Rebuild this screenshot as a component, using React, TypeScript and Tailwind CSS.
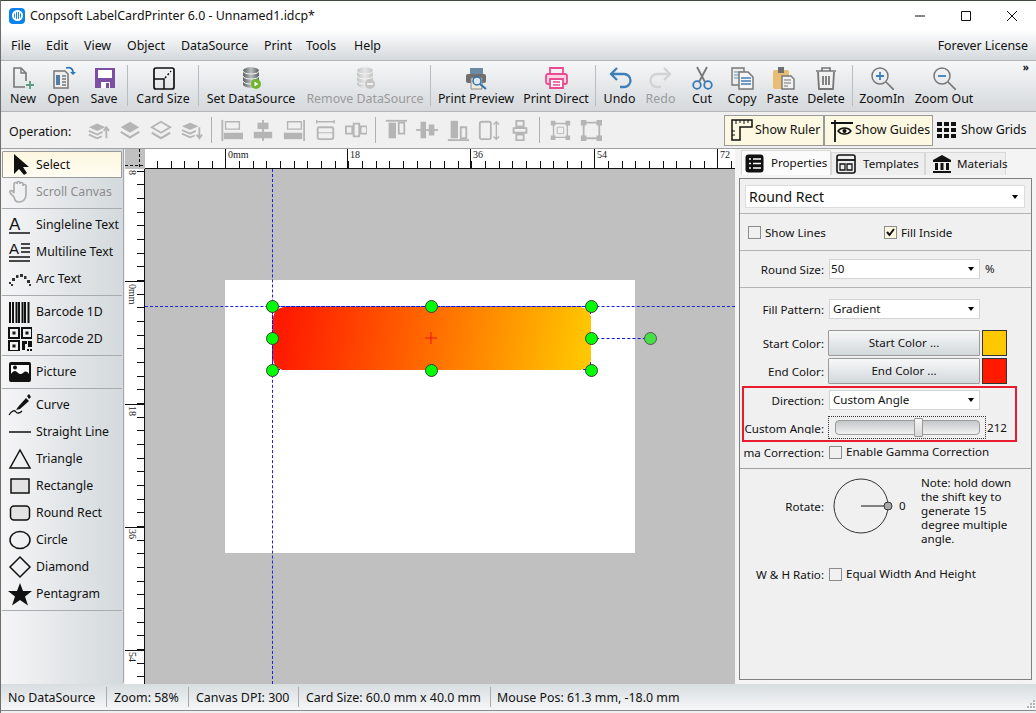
import React from "react";

const S = ({ s = 24, children, className = "" }: { s?: number; children: React.ReactNode; className?: string }) => (
  <svg width={s} height={s} viewBox={`0 0 ${s} ${s}`} fill="none" className={`block shrink-0 ${className}`}>{children}</svg>
);

const Db = ({ c1, c2 }: { c1: string; c2: string }) => (
  <>
    <defs><linearGradient id={c1.slice(1)} x1="0" x2="1" y1="0" y2="0"><stop offset="0" stopColor={c2} /><stop offset=".5" stopColor={c1} /><stop offset="1" stopColor={c2} /></linearGradient></defs>
    <path d="M4 5c0-5 16-5 16 0v13c0 5-16 5-16 0z" fill={`url(#${c1.slice(1)})`} />
    <path d="M4 5c0 4 16 4 16 0M4 10c0 4 16 4 16 0M4 15c0 4 16 4 16 0" stroke="#f4f4f4" strokeWidth="1" />
  </>
);

const tools: { label: string; w: string; dis?: boolean; icon: React.ReactNode }[] = [
  { label: "New", w: "w-[40px]", icon: <S><path d="M15 15V7l-5-5H3v19h11" stroke="#777" strokeWidth="1.6" /><path d="M10 2v5h5" stroke="#777" strokeWidth="1.4" /><path d="M19 15v8M15 19h8" stroke="#5d9c80" strokeWidth="1.8" /></S> },
  { label: "Open", w: "w-[41px]", icon: <S><path d="M2 5h11l3 3v14H2z" fill="#eee" stroke="#777" strokeWidth="1.5" /><path d="M4 9h4v10H4z" fill="#4f7ea8" /><path d="M10 10h4M10 13h4M10 16h4M10 19h4" stroke="#777" strokeWidth="1.4" /><path d="M14 2c4-1 7 0 7 5" stroke="#2d77b8" strokeWidth="1.7" /><path d="M18 6l3 3 3-3z" fill="#2d77b8" /></S> },
  { label: "Save", w: "w-[40px]", icon: <S><path d="M3 2h20v20H3z" fill="#7d4fa3" /><path d="M6 4h14v8H6z" fill="#fff" /><path d="M9 16h9v6H9z" fill="#fff" /><path d="M14 17h3v5h-3z" fill="#7d4fa3" /></S> },
  { label: "|", w: "", icon: null },
  { label: "Card Size", w: "w-[64px]", icon: <S><rect x="3" y="2" width="20" height="21" rx="2" stroke="#111" strokeWidth="1.7" /><path d="M3 13h10v10" stroke="#111" strokeWidth="1.5" /><path d="M14 12l6-7" stroke="#111" strokeWidth="1.5" strokeDasharray="2 2" /></S> },
  { label: "|", w: "", icon: null },
  { label: "Set DataSource", w: "w-[98px]", icon: <S><Db c1="#b9bdbd" c2="#5b6162" /><circle cx="17" cy="18" r="5" fill="#6fb52c" /><path d="M15.5 15.5l4 2.5-4 2.5z" fill="#fff" /></S> },
  { label: "Remove DataSource", w: "w-[124px] ml-[3px]", dis: true, icon: <S><Db c1="#e6e6e6" c2="#c4c4c4" /><circle cx="17" cy="18" r="5" fill="#c4c4c4" /><path d="M14 18h6" stroke="#fff" strokeWidth="1.5" /></S> },
  { label: "|", w: "", icon: null },
  { label: "Print Preview", w: "w-[84px]", icon: <S><path d="M6 2h13v6H6z" fill="#6d8aa5" /><rect x="2" y="8" width="20" height="9" rx="2" fill="#6f6f6f" /><path d="M7 12h11v11H7z" fill="#f0eadc" stroke="#888" /><circle cx="13" cy="15" r="4" fill="#dfe9f2" stroke="#2f73ad" strokeWidth="1.5" /><path d="M16 18l6 5" stroke="#2f73ad" strokeWidth="2" /></S> },
  { label: "Print Direct", w: "w-[72px] ml-[2px]", icon: <S><path d="M6 8V2h13v6" stroke="#ea4a90" strokeWidth="1.8" /><rect x="2" y="8" width="21" height="10" rx="2" fill="#fbd3e3" stroke="#ea4a90" strokeWidth="1.8" /><path d="M6 13h13v9H6z" fill="#fff" stroke="#ea4a90" strokeWidth="1.8" /><path d="M9 16h7M9 19h7" stroke="#ea4a90" strokeWidth="1.4" /></S> },
  { label: "|", w: "", icon: null },
  { label: "Undo", w: "w-[41px]", icon: <S><path d="M9 2L3 8l6 6" stroke="#3f7fb8" strokeWidth="2.3" /><path d="M3 8h13a6 6 0 0 1 0 13h-4" stroke="#3f7fb8" strokeWidth="2.3" /></S> },
  { label: "Redo", w: "w-[41px]", dis: true, icon: <S><path d="M15 2l6 6-6 6" stroke="#d2d2d2" strokeWidth="2.3" /><path d="M21 8H8a6 6 0 0 0 0 13h4" stroke="#d2d2d2" strokeWidth="2.3" /></S> },
  { label: "Cut", w: "w-[40px] ml-[1px]", icon: <S><path d="M7 1l8 15M17 1L9 16" stroke="#777" strokeWidth="1.8" /><circle cx="7" cy="19" r="3.8" stroke="#3a78b5" strokeWidth="1.8" /><circle cx="18" cy="19" r="3.8" stroke="#3a78b5" strokeWidth="1.8" /></S> },
  { label: "Copy", w: "w-[40px]", icon: <S><path d="M2 2h12v17H2z" fill="#eee" stroke="#777" strokeWidth="1.4" /><path d="M4 6h8M4 9h8M4 12h8" stroke="#5f8fb8" strokeWidth="1.2" /><path d="M9 6h9l5 5v12H9z" fill="#f6f6f6" stroke="#777" strokeWidth="1.5" /><path d="M11 12h10M11 15h10M11 18h10" stroke="#3f7fb8" strokeWidth="1.4" /></S> },
  { label: "Paste", w: "w-[41px]", icon: <S><rect x="2" y="4" width="16" height="19" rx="2" fill="#e8bd74" /><path d="M7 1h6v6H7z" fill="#6f6f6f" /><path d="M11 10h9l3 3v10H11z" fill="#f1f1f1" stroke="#777" strokeWidth="1.4" /><path d="M13 14h7M13 17h7M13 20h4" stroke="#777" strokeWidth="1.2" /></S> },
  { label: "Delete", w: "w-[46px]", icon: <S><path d="M2 5h20M8 5V2h8v3" stroke="#777" strokeWidth="1.7" /><path d="M4 6l1 17h14l1-17" stroke="#777" strokeWidth="1.8" fill="#f1f1f1" /><path d="M9 10v9M12 10v9M15 10v9" stroke="#777" strokeWidth="1.8" /></S> },
  { label: "|", w: "", icon: null },
  { label: "ZoomIn", w: "w-[52px]", icon: <S><circle cx="10" cy="10" r="8" stroke="#777" strokeWidth="1.5" /><path d="M16 16l8 8" stroke="#777" strokeWidth="1.7" /><path d="M10 6v8M6 10h8" stroke="#3f7fb8" strokeWidth="1.8" /></S> },
  { label: "Zoom Out", w: "w-[66px] ml-[3px]", icon: <S><circle cx="10" cy="10" r="8" stroke="#777" strokeWidth="1.5" /><path d="M16 16l8 8" stroke="#777" strokeWidth="1.7" /><path d="M6 10h8" stroke="#3f7fb8" strokeWidth="1.8" /></S> },
];

const g = "#b5b5b5";
const opIcons: (React.ReactNode | string)[] = [
  <S><path d="M1 9l9-4 9 4-9 4z" fill={g} /><path d="M1 13l9 4 6-3M1 17l9 4 5-2" stroke={g} strokeWidth="2" /><path d="M20 21V10M17 13l3-4 3 4" stroke={g} strokeWidth="2" /></S>,
  <S><path d="M2 9l10-6 10 6-10 6z" fill={g} /><path d="M2 14l10 6 10-6" stroke={g} strokeWidth="2.4" /></S>,
  <S><path d="M2 9l10-6 10 6-10 6z" stroke={g} strokeWidth="2" /><path d="M2 15l10 6 10-6" stroke={g} strokeWidth="2.4" /></S>,
  <S><path d="M1 8l9-4 9 4-9 4z" fill={g} /><path d="M1 12l9 4 6-3M1 16l9 4 5-2" stroke={g} strokeWidth="2" /><path d="M20 9v11M17 17l3 4 3-4" stroke={g} strokeWidth="2" /></S>,
  "|",
  <S><path d="M1.5 1v23" stroke={g} strokeWidth="2" /><path d="M5 3h15v8H5z" stroke={g} strokeWidth="1.5" /><path d="M3 15h21v7H3z" fill={g} /></S>,
  <S><path d="M12 1v23" stroke={g} strokeWidth="2" /><path d="M6 4h12v7H6z" fill={g} /><path d="M2 14h20v7H2z" fill={g} /></S>,
  <S><path d="M23 1v23" stroke={g} strokeWidth="2" /><path d="M5 3h15v8H5z" stroke={g} strokeWidth="1.5" /><path d="M1 15h20v7H1z" fill={g} /></S>,
  <S><path d="M3 3h19M3 1v4M22 1v4" stroke={g} strokeWidth="1.5" /><rect x="4" y="9" width="17" height="13" rx="2" stroke={g} strokeWidth="2" /><path d="M4 15h17" stroke={g} /></S>,
  <S><path d="M0 12h25" stroke={g} /><path d="M1 8h7v8H1zM9.5 5h6v14h-6zM17 8h7v8h-7z" fill="#f0f0f0" stroke={g} strokeWidth="2" /></S>,
  "|",
  <S><path d="M1 2h23" stroke={g} strokeWidth="2" /><path d="M4 4h8v17H4z" fill={g} /><path d="M15 4h6v12h-6z" stroke={g} strokeWidth="2" /></S>,
  <S><path d="M0 12h24" stroke={g} strokeWidth="2" /><path d="M5 3h6v18H5z" fill={g} /><path d="M14 6h6v12h-6z" fill={g} /></S>,
  <S><path d="M1 23h23" stroke={g} strokeWidth="2" /><path d="M4 2h8v19H4z" fill={g} /><path d="M15 9h6v12h-6z" stroke={g} strokeWidth="2" /></S>,
  <S><rect x="2" y="3" width="12" height="19" rx="2" stroke={g} strokeWidth="2" /><path d="M20 3v19M17 6l3-3 3 3M17 19l3 3 3-3" stroke={g} strokeWidth="1.5" /></S>,
  <S><path d="M12 1v23" stroke={g} /><path d="M8 2h8v6H8zM5 10h14v5H5zM8 17h8v6H8z" fill="#f0f0f0" stroke={g} strokeWidth="2" /></S>,
  "|",
  <S><path d="M5 5h15v15H5z" stroke={g} strokeWidth="1.5" /><path d="M9 9h7v7H9z" stroke={g} /><path d="M2 2h5v5H2zM18 2h5v5h-5zM2 18h5v5H2zM18 18h5v5h-5z" fill={g} /></S>,
  <S><path d="M4 4h17v17H4z" stroke={g} strokeWidth="2" /><path d="M1 1h6v6H1zM18 1h6v6h-6zM1 18h6v6H1zM18 18h6v6h-6z" fill={g} /></S>,
];

const k = "#111";
const side: (null | { label: string; dis?: boolean; active?: boolean; icon: React.ReactNode })[] = [
  { label: "Select", active: true, icon: <S><path d="M6 2v20l5-5 5 6 3-2-4-6h6z" fill={k} transform="translate(0 -1)" /></S> },
  { label: "Scroll Canvas", dis: true, icon: <S><path d="M6 17c-3-3-5-5-4-6s3 0 4 2l0-9c0-2 3-2 3 0V3c0-2 3-2 3 0v1c0-2 3-2 3 0v2c0-2 3-2 3 0v8c0 5-3 8-7 8s-4-2-5-5z" stroke="#adadad" strokeWidth="1.7" /></S> },
  null,
  { label: "Singleline Text", icon: <S><text x="1" y="17" fontSize="17" fill={k} fontFamily="Liberation Sans">A</text><path d="M1 20h21" stroke={k} strokeWidth="1.5" /></S> },
  { label: "Multiline Text", icon: <S><text x="1" y="14" fontSize="15" fill={k} fontFamily="Liberation Sans">A</text><path d="M13 4h9M13 8h9M13 12h9M1 17h21M1 21h21" stroke={k} strokeWidth="1.4" /></S> },
  { label: "Arc Text", icon: <S><path d="M1 15h2v2H1zM3 17h2v2H3zM4 11h3v3H4zM8 8h2.500v3H8zM12 7h3v3h-3zM16 9h2.500v3H16zM19 13h3v3h-3zM21 17h2v2h-2z" fill="#333" /></S> },
  null,
  { label: "Barcode 1D", icon: <S><path d="M2 2v21M5 2v21M8.5 2v21M11 2v21M14.5 2v21M17 2v21M20.5 2v21" stroke={k} strokeWidth="2" /></S> },
  { label: "Barcode 2D", icon: <S><path d="M1 1h10v10H1zM14 1h10v10H14zM1 14h10v10H1z" stroke={k} strokeWidth="2" /><path d="M4.5 4.5h3v3h-3zM17.5 4.5h3v3h-3zM4.500 17.5h3v3h-3z" fill={k} /><path d="M14 14h5v3h-2v6h-3zM20 14h4v6h-4zM19 22h2v2h-2zM22 22h2v2h-2z" fill={k} /></S> },
  null,
  { label: "Picture", icon: <S><rect x="1" y="2" width="22" height="20" rx="2" fill={k} /><path d="M3 5h18v9c-2-3-4-3-6-1-2 2-4 1-6-1-2-2-4-1-6 2z" fill="#fff" /><circle cx="7" cy="7.5" r="2" fill={k} /></S> },
  null,
  { label: "Curve", icon: <S><path d="M10 14l8-9 3 3-9 8-4 1z" fill={k} /><path d="M19 3l2-2 2 3-2 2z" fill={k} /><path d="M1 22c3-5 6-5 7-3s4 1 6-1" stroke={k} strokeWidth="1.3" /></S> },
  { label: "Straight Line", icon: <S><path d="M1 12h22" stroke={k} strokeWidth="1.5" /></S> },
  { label: "Triangle", icon: <S><path d="M12 3L2 21h20z" stroke={k} strokeWidth="1.5" /></S> },
  { label: "Rectangle", icon: <S><path d="M3 5h18v14H3z" fill="#e3e3e3" stroke={k} strokeWidth="1.5" /></S> },
  { label: "Round Rect", icon: <S><rect x="2.5" y="5" width="19" height="14" rx="3.5" fill="#e3e3e3" stroke={k} strokeWidth="1.5" /></S> },
  { label: "Circle", icon: <S><ellipse cx="12" cy="12" rx="10" ry="8.5" stroke={k} strokeWidth="1.5" /></S> },
  { label: "Diamond", icon: <S><path d="M12 2l10 10-10 10L2 12z" stroke={k} strokeWidth="1.5" /></S> },
  { label: "Pentagram", icon: <S><path d="M12 1l3 8h9l-7 5.5 3 9-8-5.5-8 5.5 3-9-7-5.5h9z" fill={k} /></S> },
  null,
];

const Caret = () => <span className="ml-auto w-0 h-0 border-x-[3.5px] border-x-transparent border-t-[4px] border-t-black" />;

const Drop = ({ text, cls = "" }: { text: string; cls?: string }) => (
  <div className={`flex items-center w-[151px] h-[20px] bg-white border border-[#d4d4d4] pl-[3px] pr-[5px] ${cls}`}>
    <span>{text}</span><Caret />
  </div>
);

const Check = ({ on = false }: { on?: boolean }) => (
  <span className={`block w-[13px] h-[13px] shrink-0 border border-[#8c8c8c] ${on ? "bg-[#fdf8e2]" : "bg-[#f0f0f0]"}`}>
    {on && <svg width="11" height="11" viewBox="0 0 11 11" className="block"><path d="M2 5l2.5 3L9 2" stroke="#111" strokeWidth="2" fill="none" /></svg>}
  </span>
);

const Label = ({ text, w = "w-[84px]" }: { text: string; w?: string }) => (
  <div className={`flex justify-end overflow-hidden whitespace-nowrap shrink-0 mr-[5px] pt-[2px] ${w}`}><span className="shrink-0">{text}</span></div>
);

const ColorBtn = ({ text }: { text: string }) => (
  <div className="flex items-center justify-center w-[152px] h-full -ml-[1px] border border-[#9a9a9a] rounded-[1px] bg-gradient-to-b from-[#f7f8f8] to-[#d3d8db]">{text}</div>
);

const topTicks = Array.from({ length: 44 }, (_, i) => 12 + i * 13.67);
const leftTicks = Array.from({ length: 38 }, (_, i) => 1.7 + i * 13.67);

const Handle = ({ cls }: { cls: string }) => (
  <span className={`absolute w-[13px] h-[13px] rounded-full bg-[#00ff00] border border-[#3a3a3a] ${cls}`} />
);

export default function App() {
  return (
    <div className="relative w-[1036px] h-[713px] overflow-hidden bg-[#f0f0f0] text-[12.4px] text-[#111] font-['DejaVu_Sans',sans-serif] [font-stretch:condensed] leading-none border-l border-l-[#6e6e6e] border-t border-t-[#3f4a3f]">
      {/* title */}
      <div className="flex items-center h-[29px] bg-white">
        <div className="flex items-center justify-center w-[16px] h-[16px] ml-[8px] rounded-[4px] bg-[#0a84ea]">
          <div className="w-[11px] h-[11px] rounded-full bg-white flex items-center justify-center"><div className="w-[7px] h-[7px] rounded-full bg-[repeating-linear-gradient(90deg,#0a84ea_0_1px,#ffffff_1px_2px)]" /></div>
        </div>
        <span className="ml-[5px] pt-[2px]">Conpsoft LabelCardPrinter 6.0 - Unnamed1.idcp*</span>
        <div className="ml-auto flex items-center">
          <svg width="12" height="12" viewBox="0 0 12 12" className="mr-[34px]"><path d="M1 6h10" stroke="#111" /></svg>
          <svg width="12" height="12" viewBox="0 0 12 12" className="mr-[34px]"><path d="M1.5 1.5h9v9h-9z" stroke="#111" fill="none" /></svg>
          <svg width="12" height="12" viewBox="0 0 12 12" className="mr-[18px]"><path d="M1 1l10 10M11 1L1 11" stroke="#111" /></svg>
        </div>
      </div>
      {/* menu */}
      <div className="flex items-center h-[31px] pt-[2px] pl-[10px] pr-[8px] bg-gradient-to-b from-white to-[#d5d9dc] border-b border-b-[#b4b4b4]">
        <span className="w-[35px]">File</span><span className="w-[38px]">Edit</span><span className="w-[43px]">View</span><span className="w-[54px]">Object</span><span className="w-[83px]">DataSource</span><span className="w-[42px]">Print</span><span className="w-[48px]">Tools</span><span>Help</span>
        <span className="ml-auto">Forever License</span>
      </div>
      {/* toolbar */}
      <div className="relative flex items-start h-[51px] pl-[2px] pt-[5px] bg-gradient-to-b from-[#f6f7f8] to-[#d5d9dc] border-b border-b-[#b4b4b4]">
        {tools.map((t, i) =>
          t.label === "|" ? (
            <div key={i} className="w-px h-[41px] -mt-[1px] mx-[3px] bg-[#b9bdc0] shrink-0" />
          ) : (
            <div key={i} className={`flex flex-col items-center shrink-0 ${t.w} ${t.dis ? "text-[#9a9a9a]" : ""}`}>
              {t.icon}
              <span className="mt-[2px] h-[15px] flex items-center whitespace-nowrap">{t.label}</span>
            </div>
          )
        )}
        <span className="absolute right-[7px] top-[1px] text-[10px] font-bold">»</span>
      </div>
      {/* operation */}
      <div className="flex items-center h-[37px] pl-[8px] pr-[5px] bg-[#f0f0f0] border-b border-b-[#a0a0a0]">
        <span className="w-[74px] shrink-0 pt-[4px]">Operation:</span>
        {opIcons.map((c, i) =>
          c === "|" ? (
            <div key={i} className="w-px h-[26px] mx-[4px] bg-[#b0b0b0] shrink-0" />
          ) : (
            <div key={i} className="w-[32px] -mx-[0.5px] flex justify-center shrink-0 scale-[0.92]">{c}</div>
          )
        )}
        <div className="ml-auto flex items-center h-[31px] whitespace-nowrap">
          <div className="flex items-center h-full w-[100px] pl-[5px] bg-[#fdf8e2] border border-[#9a9a9a]">
            <S><path d="M2 2h20v7H10v13H2z" stroke={k} strokeWidth="1.5" /><path d="M6 2v4M10 2v3M14 2v4M18 2v3M2 13h3M2 17h3" stroke={k} /></S>
            <span className="ml-[1px]">Show Ruler</span>
          </div>
          <div className="flex items-center h-full w-[109px] pl-[5px] bg-[#fdf8e2] border border-[#9a9a9a]">
            <S><path d="M5 2v22M1 5h22" stroke={k} strokeWidth="1.8" /><path d="M8 13c3-4 10-4 13 0-3 4-10 4-13 0z" stroke={k} strokeWidth="1.3" /><circle cx="14.5" cy="13" r="2" fill={k} /></S>
            <span className="ml-[1px]">Show Guides</span>
          </div>
          <div className="flex items-center ml-[3px] w-[95px]">
            <S s={20}><path d="M1 2h5v4H1zM8 2h5v4H8zM15 2h5v4h-5zM1 8h5v4H1zM8 8h5v4H8zM15 8h5v4h-5zM1 14h5v4H1zM8 14h5v4H8zM15 14h5v4h-5z" fill={k} /></S>
            <span className="ml-[5px]">Show Grids</span>
          </div>
        </div>
      </div>
      {/* main */}
      <div className="flex h-[535px]">
        {/* left */}
        <div className="w-[123px] shrink-0 pt-[2px] px-[1px] text-[12.3px] bg-gradient-to-r from-[#f5f5f6] to-[#d3d9dc] border-r border-r-[#a8a8a8] rounded-br-[3px] mr-[1px]">
          {side.map((r, i) =>
            r === null ? (
              <div key={i} className="h-[6px] flex items-center"><div className="w-full h-px bg-[#a9acae]" /></div>
            ) : (
              <div key={i} className={`flex items-center h-[27px] ${r.dis ? "text-[#8c8c8c]" : ""} ${r.active ? "bg-gradient-to-b from-[#fdf7e0] to-[#fffdf2] border border-[#9a9a9a] rounded-[1px] pl-[5px]" : "pl-[6px]"}`}>
                {r.icon}
                <span className="ml-[4px] pt-[2px] whitespace-nowrap">{r.label}</span>
              </div>
            )
          )}
        </div>
        {/* canvas + rulers */}
        <div className="w-[610px] shrink-0 flex flex-col">
          <div className="flex h-[20px] shrink-0">
            <div className="relative w-[20px] bg-[#c0c0c0]">
              <svg width="20" height="20" className="block"><path d="M14.5 0v20M0 16.5h20" stroke="#111" strokeDasharray="3 2" /></svg>
            </div>
            <svg width="590" height="20" className="block bg-white">
              {topTicks.map((x, i) => <path key={i} d={`M${Math.round(x) + 0.5} 12v7`} stroke="#111" />)}
              {[80, 202, 325, 449, 572].map((x) => <path key={x} d={`M${x + 0.5} 0v19`} stroke="#111" />)}
              <path d="M0 19.5h590" stroke="#111" />
              {[["0mm", 83], ["18", 205], ["36", 328], ["54", 452], ["72", 575]].map(([t, x]) => (
                <text key={t} x={x} y="9" fontSize="10" fill="#222" fontFamily="Liberation Serif">{t}</text>
              ))}
            </svg>
          </div>
          <div className="flex flex-1 min-h-0">
            <svg width="20" height="515" className="block bg-white shrink-0">
              {leftTicks.map((y, i) => <path key={i} d={`M12 ${Math.round(y) + 0.5}h8`} stroke="#111" />)}
              {[112, 235, 358, 481].map((y) => <path key={y} d={`M0 ${y + 0.5}h20`} stroke="#111" />)}
              <path d="M19.5 0v515" stroke="#111" />
              {[["8", 1], ["0mm", 115], ["18", 237], ["36", 360], ["54", 483]].map(([t, y]) => (
                <text key={t} x="4" y={y} fontSize="10" fill="#222" fontFamily="Liberation Serif" transform={`rotate(90 4 ${y})`}>{t}</text>
              ))}
            </svg>
            <div className="relative flex-1 bg-[#c0c0c0] overflow-hidden">
              <div className="absolute left-[80px] top-[111px] w-[410px] h-[273px] bg-white" />
              <div className="absolute left-[127px] top-0 h-full w-0 border-0 border-l border-dashed border-[#2020e0]" />
              <div className="absolute left-0 top-[137px] w-full border-t border-dashed border-t-[#2020e0]" />
              <div className="absolute left-[127px] top-[137px] w-[319px] h-[64px] border border-dashed border-[#1010e0]" />
              <div className="absolute left-[128px] top-[138px] w-[318px] h-[63px] rounded-[12px] bg-[linear-gradient(100deg,#ff1a00_4%,#ff5a00_40%,#ffa500_80%,#ffc800_98%)]" />
              <svg width="12" height="12" viewBox="0 0 12 12" className="absolute left-[280px] top-[163px]"><path d="M0 6h12M6 0v12" stroke="#f01010" /></svg>
              <div className="absolute left-[446px] top-[169px] w-[60px] border-t border-dashed border-t-[#1010e0]" />
              <span className="absolute left-[499px] top-[163px] w-[13px] h-[13px] rounded-full bg-[#45e045] border border-[#555]" />
              <Handle cls="left-[121px] top-[131px]" />
              <Handle cls="left-[280px] top-[131px]" />
              <Handle cls="left-[440px] top-[131px]" />
              <Handle cls="left-[121px] top-[163px]" />
              <Handle cls="left-[440px] top-[163px]" />
              <Handle cls="left-[121px] top-[195px]" />
              <Handle cls="left-[280px] top-[195px]" />
              <Handle cls="left-[440px] top-[195px]" />
            </div>
          </div>
        </div>
        {/* right */}
        <div className="w-[301px] shrink-0 pl-[4px] pr-[4px] pt-[1px] bg-[#f4f4f4] text-[11.6px]">
          <div className="flex items-end h-[25px] mb-[3px] pl-[2px]">
            <div className="flex items-center h-[25px] w-[90px] pl-[3px] bg-[#fbfbfb] border border-b-0 border-[#d8d8d8]">
              <S s={19}><rect x="0.5" y="0.5" width="18" height="18" rx="3" fill={k} /><path d="M4 5h2M8 5h8M4 9.5h2M8 9.5h8M4 14h2M8 14h8" stroke="#fff" strokeWidth="1.6" /></S>
              <span className="ml-[7px]">Properties</span>
            </div>
            <div className="flex items-center h-[23px] w-[94px] pl-[4px] bg-[#eeeeee] border border-b-0 border-[#d8d8d8]">
              <S s={20}><rect x="1" y="1" width="18" height="18" rx="2" stroke={k} strokeWidth="1.6" /><path d="M1 6h18" stroke={k} strokeWidth="1.8" /><path d="M4 10h5v6H4zM11 10h5v6h-5z" stroke={k} strokeWidth="1.3" /></S>
              <span className="ml-[7px]">Templates</span>
            </div>
            <div className="flex items-center h-[23px] w-[81px] pl-[6px] bg-[#eeeeee] border border-b-0 border-[#d8d8d8]">
              <S s={20}><path d="M10 1l9 5v2H1V6z" fill={k} /><path d="M3 9h3v7H3zM8.5 9h3v7h-3zM14 9h3v7h-3zM1 17h18v2H1z" fill={k} /></S>
              <span className="ml-[5px]">Materials</span>
            </div>
          </div>
          <div className="h-[502px] border border-[#808080] bg-[#f0f0f0]">
            <div className="h-[35px] pt-[6px] px-[5px] border-b border-b-[#b4b4b4]">
              <div className="flex items-center h-[23px] w-[280px] bg-white border border-[#dcdcdc] pl-[3px] pr-[6px] text-[14px]"><span>Round Rect</span><Caret /></div>
            </div>
            <div className="flex items-center h-[37px] pl-[8px] pt-[1px] border-b border-b-[#b4b4b4]">
              <Check /><span className="ml-[4px] w-[119px]">Show Lines</span><Check on /><span className="ml-[4px]">Fill Inside</span>
            </div>
            <div className="flex items-center h-[37px] border-b border-b-[#b4b4b4]">
              <Label text="Round Size:" /><Drop text="50" cls="!pl-[1px]" /><span className="ml-[5px]">%</span>
            </div>
            <div className="h-[181px] pt-[11px] border-b border-b-[#a0a0a0]">
              <div className="flex items-center h-[20px]"><Label text="Fill Pattern:" /><Drop text="Gradient" /></div>
              <div className="flex items-center h-[26px] mt-[11px]">
                <Label text="Start Color:" /><ColorBtn text="Start Color ..." /><div className="w-[25px] h-[26px] ml-[2px] bg-[#ffc800] border border-[#333]" />
              </div>
              <div className="flex items-center h-[26px] mt-[2px]">
                <Label text="End Color:" /><ColorBtn text="End Color ..." /><div className="w-[25px] h-[26px] ml-[2px] bg-[#ff1a00] border border-[#333]" />
              </div>
              <div className="h-[56px] w-[275px] ml-[2px] mt-[2px] pt-[2px] border-2 border-[#e81c2c]">
                <div className="flex items-center h-[20px]"><Label text="Direction:" w="w-[80px]" /><Drop text="Custom Angle" /></div>
                <div className="flex items-center h-[23px] mt-[6px]">
                  <Label text="Custom Angle:" w="w-[80px]" />
                  <div className="relative flex items-center -ml-[1px] w-[158px] h-[23px] border border-dotted border-[#333] pl-[6px]">
                    <div className="w-[145px] h-[15px] rounded-[4px] border border-[#9a9a9a] bg-gradient-to-b from-[#c4c7c9] to-[#f2f2f2]" />
                    <div className="absolute left-[85px] top-[1px] w-[9px] h-[19px] rounded-[1px] bg-gradient-to-b from-[#f5f5f5] to-[#d8d8d8] border border-[#9a9a9a]" />
                  </div>
                  <span className="ml-[1px]">212</span>
                </div>
              </div>
              <div className="flex items-center h-[18px] mt-[1px]">
                <Label text="Gamma Correction:" w="w-[80px] ml-[4px]" /><Check /><span className="ml-[4px]">Enable Gamma Correction</span>
              </div>
            </div>
            <div className="flex h-[96px] pt-[8px]">
              <div className="flex items-center h-[58px]"><Label text="Rotate:" /></div>
              <div className="relative w-[80px] h-[60px] shrink-0">
                <svg width="70" height="60" viewBox="0 0 70 60" className="block">
                  <circle cx="32" cy="29" r="27" stroke="#333" fill="none" />
                  <path d="M32 29h27" stroke="#111" />
                  <circle cx="59" cy="29" r="4" fill="#a9a9a9" stroke="#333" />
                </svg>
                <span className="absolute left-[70px] top-[23px]">0</span>
              </div>
              <div className="ml-[12px] w-[100px] leading-[14px] -mt-[1px] whitespace-nowrap">
                Note: hold down<br />the shift key to<br />generate 15<br />degree multiple<br />angle.
              </div>
            </div>
            <div className="flex items-center h-[18px]">
              <Label text="W & H Ratio:" /><Check /><span className="ml-[4px]">Equal Width And Height</span>
            </div>
          </div>
        </div>
      </div>
      {/* status */}
      <div className="relative flex items-center h-[27px] pl-[7px] bg-gradient-to-b from-[#d8dde0] to-[#f6f7f8] border-b border-b-[#8a8a8a]">
        <span className="w-[98px] pt-[2px]">No DataSource</span>
        <span className="w-px h-[20px] bg-[#aaaaaa]" />
        <span className="w-[81px] pl-[7px] pt-[2px]">Zoom: 58%</span>
        <span className="w-px h-[20px] bg-[#aaaaaa]" />
        <span className="w-[109px] pl-[7px] pt-[2px]">Canvas DPI: 300</span>
        <span className="w-px h-[20px] bg-[#aaaaaa]" />
        <span className="w-[191px] pl-[7px] pt-[2px]">Card Size: 60.0 mm x 40.0 mm</span>
        <span className="w-px h-[20px] bg-[#aaaaaa]" />
        <span className="pl-[6px] pt-[2px]">Mouse Pos: 61.3 mm, -18.0 mm</span>
        <svg width="11" height="11" viewBox="0 0 11 11" className="absolute right-0 bottom-0"><path d="M8 1h2v2H8zM5 4h2v2H5zM8 4h2v2H8zM2 7h2v2H2zM5 7h2v2H5zM8 7h2v2H8z" fill="#b5b5b5" /></svg>
      </div>
    </div>
  );
}
